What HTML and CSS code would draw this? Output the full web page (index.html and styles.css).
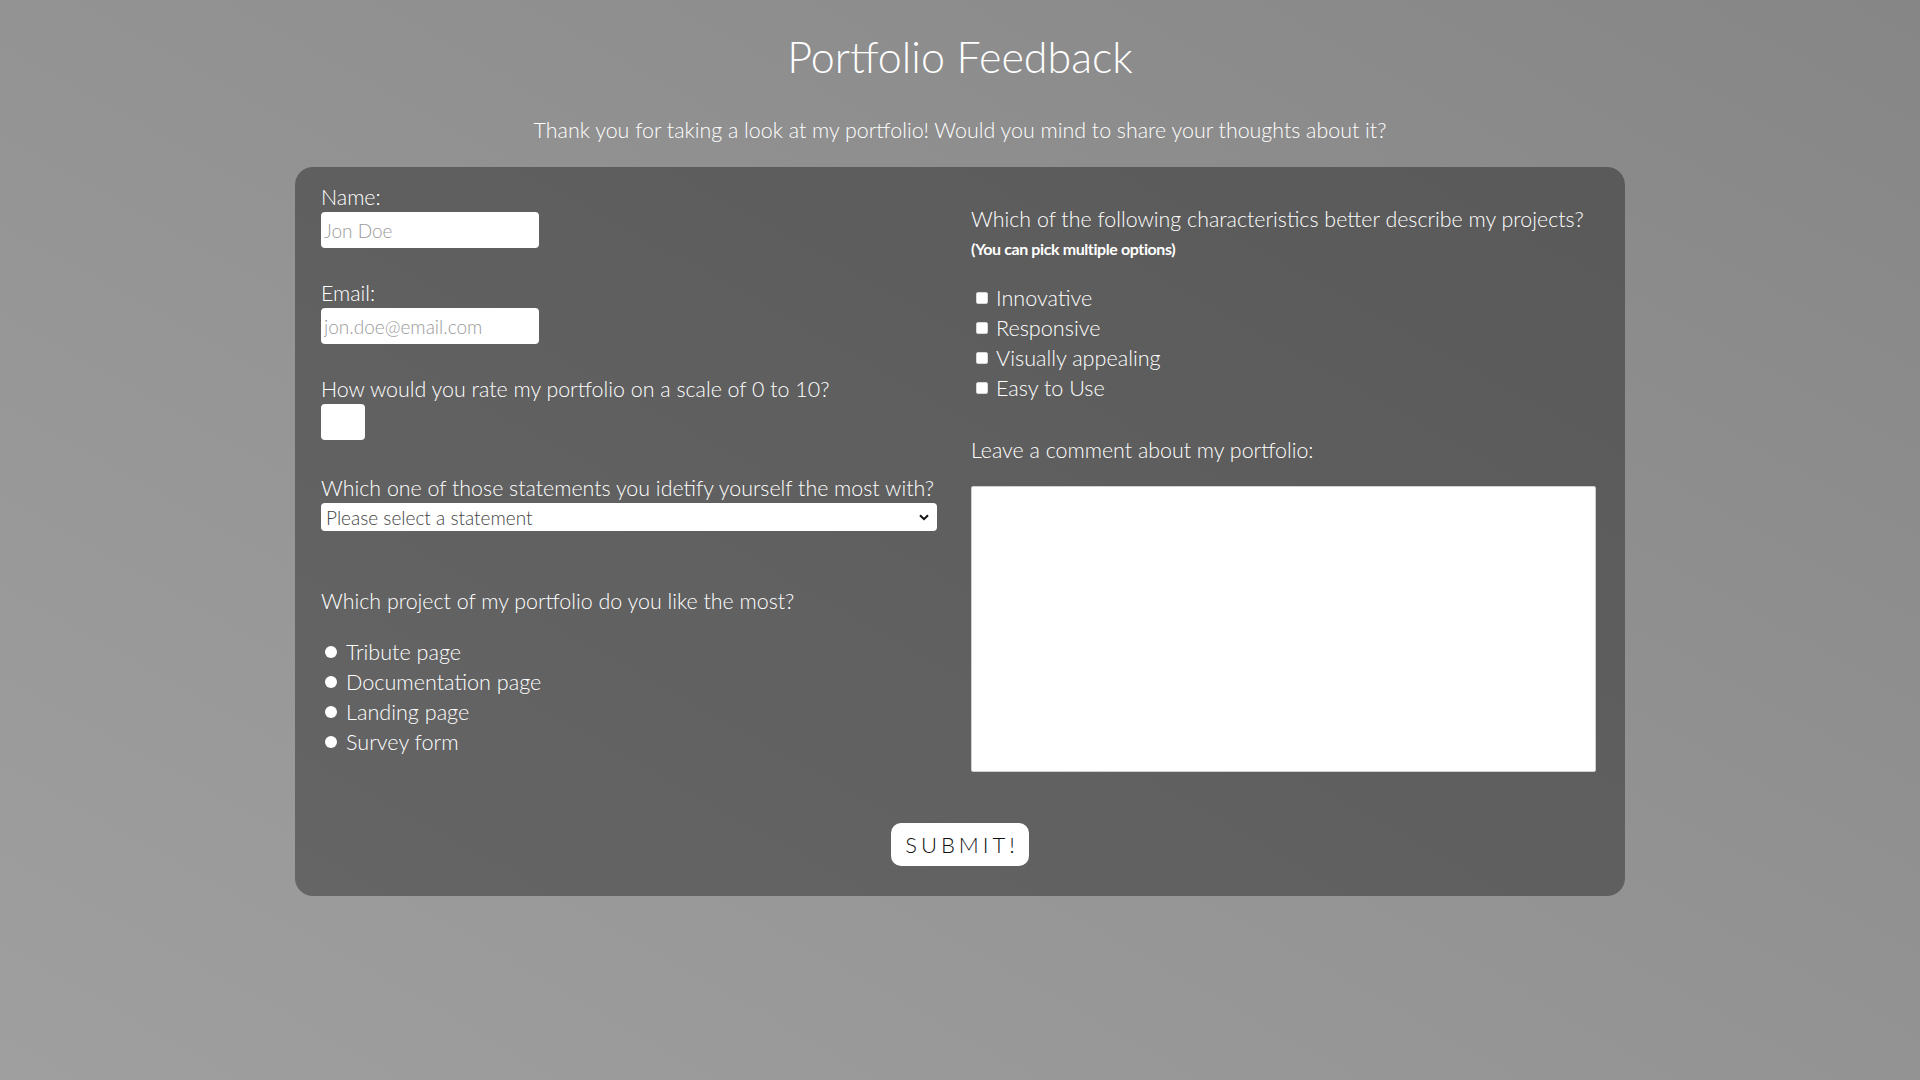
FILE: index.html
```html
<!DOCTYPE html>
<html lang="en">
<head>
<meta charset="utf-8">
<title>Portfolio Feedback</title>
<link rel="stylesheet" href="styles.css">
</head>
<body>
<header class="header">
  <h1 class="title" id="title">Portfolio Feedback</h1>
  <p class="description" id="description">Thank you for taking a look at my portfolio! Would you mind to share your thoughts about it?</p>
</header>
<form class="card" id="survey-form">
  <div class="columns">
    <div class="col">
      <label class="label" for="name">Name:</label>
      <input class="text-input" id="name" type="text" placeholder="Jon Doe">

      <label class="label gap-md" for="email">Email:</label>
      <input class="text-input" id="email" type="email" placeholder="jon.doe@email.com">

      <label class="label gap-md" for="number">How would you rate my portfolio on a scale of 0 to 10?</label>
      <input class="number-input" id="number" type="text">

      <label class="label gap-select" for="dropdown">Which one of those statements you idetify yourself the most with?</label>
      <div class="select">
        <span>Please select a statement</span>
        <svg class="chev" width="10" height="7" viewBox="0 0 10 7"><path d="M1 1.2 L5 5.2 L9 1.2" fill="none" stroke="#111" stroke-width="2"/></svg>
      </div>

      <p class="label gap-lg">Which project of my portfolio do you like the most?</p>
      <ul class="options radios">
        <li class="option"><span class="radio"></span>Tribute page</li>
        <li class="option"><span class="radio"></span>Documentation page</li>
        <li class="option"><span class="radio"></span>Landing page</li>
        <li class="option"><span class="radio"></span>Survey form</li>
      </ul>
    </div>
    <div class="col">
      <p class="label first-right">Which of the following characteristics better describe my projects?</p>
      <p class="hint">(You can pick multiple options)</p>
      <ul class="options checks">
        <li class="option"><span class="check"></span>Innovative</li>
        <li class="option"><span class="check"></span>Responsive</li>
        <li class="option"><span class="check"></span>Visually appealing</li>
        <li class="option"><span class="check"></span>Easy to Use</li>
      </ul>
      <p class="label comment-label">Leave a comment about my portfolio:</p>
      <div class="textarea"></div>
    </div>
  </div>
  <div class="actions">
    <button class="submit" type="button">SUBMIT!</button>
  </div>
</form>
</body>
</html>
```

FILE: styles.css
```css
* { box-sizing: border-box; }

html, body {
  margin: 0;
  padding: 0;
}

body {
  min-height: 1080px;
  background: linear-gradient(to top right, #9f9f9f 0%, #939393 50%, #868686 100%);
  font-family: "Lato", "Noto Sans", sans-serif;
  font-weight: 300;
  color: #ffffff;
}

.header {
  text-align: center;
  padding-top: 31px;
}

.title {
  margin: 0;
  font-size: 43px;
  line-height: 52px;
  font-weight: 300;
}

.description {
  margin: 35px 0 0;
  font-size: 21.4px;
  line-height: 24px;
}

.card {
  width: 1330px;
  margin: 25px auto 0;
  background: rgba(0, 0, 0, 0.35);
  border-radius: 18px;
  padding: 18px 26px 30px;
}

.columns {
  display: grid;
  grid-template-columns: 1fr 1fr;
  column-gap: 22px;
}

.col {
  display: flex;
  flex-direction: column;
  align-items: flex-start;
}

.label {
  display: block;
  margin: 0 0 3px;
  font-size: 21.4px;
  line-height: 24px;
}

.gap-md { margin-top: 33px; }
.gap-select { margin-top: 36px; }
.gap-lg { margin-top: 58px; margin-bottom: 24px; }

.text-input {
  width: 218px;
  height: 36px;
  border: none;
  border-radius: 4px;
  background: #fff;
  padding: 0 3px;
  font-family: inherit;
  font-weight: 300;
  font-size: 19px;
  outline: none;
}

.text-input::placeholder { color: #9a9a9a; }

.number-input {
  width: 44px;
  height: 36px;
  border: none;
  border-radius: 4px;
  background: #fff;
  outline: none;
}

.select {
  width: 616px;
  height: 28px;
  background: #fff;
  border-radius: 4px;
  display: flex;
  align-items: center;
  justify-content: space-between;
  padding: 0 8px 0 5px;
  color: #444;
  font-size: 19px;
}

.options {
  list-style: none;
  margin: 0;
  padding: 0;
}

.option {
  display: flex;
  align-items: center;
  height: 30px;
  font-size: 21.6px;
}

.radio {
  width: 12px;
  height: 12px;
  border-radius: 50%;
  background: #fff;
  margin: 0 9px 0 4px;
}

.check {
  width: 12px;
  height: 12px;
  border-radius: 2px;
  background: #fff;
  border: 1px solid #d8d8d8;
  margin: 0 8px 0 5px;
}

.first-right { margin-top: 22px; margin-bottom: 8px; }

.hint {
  margin: 0 0 24px;
  font-size: 16px;
  line-height: 20px;
  font-weight: 700;
  letter-spacing: -0.4px;
}

.comment-label { margin-top: 35px; margin-bottom: 24px; }

.textarea {
  width: 625px;
  height: 286px;
  background: #fff;
  border: 1px solid #cfcfcf;
  border-radius: 2px;
}

.actions {
  display: flex;
  justify-content: center;
  margin-top: 51px;
}

.submit {
  width: 138px;
  height: 43px;
  border: none;
  border-radius: 10px;
  background: #fff;
  color: #111;
  font-family: inherit;
  font-weight: 300;
  font-size: 22px;
  letter-spacing: 4px;
  padding: 0 0 0 4px;
}
```
